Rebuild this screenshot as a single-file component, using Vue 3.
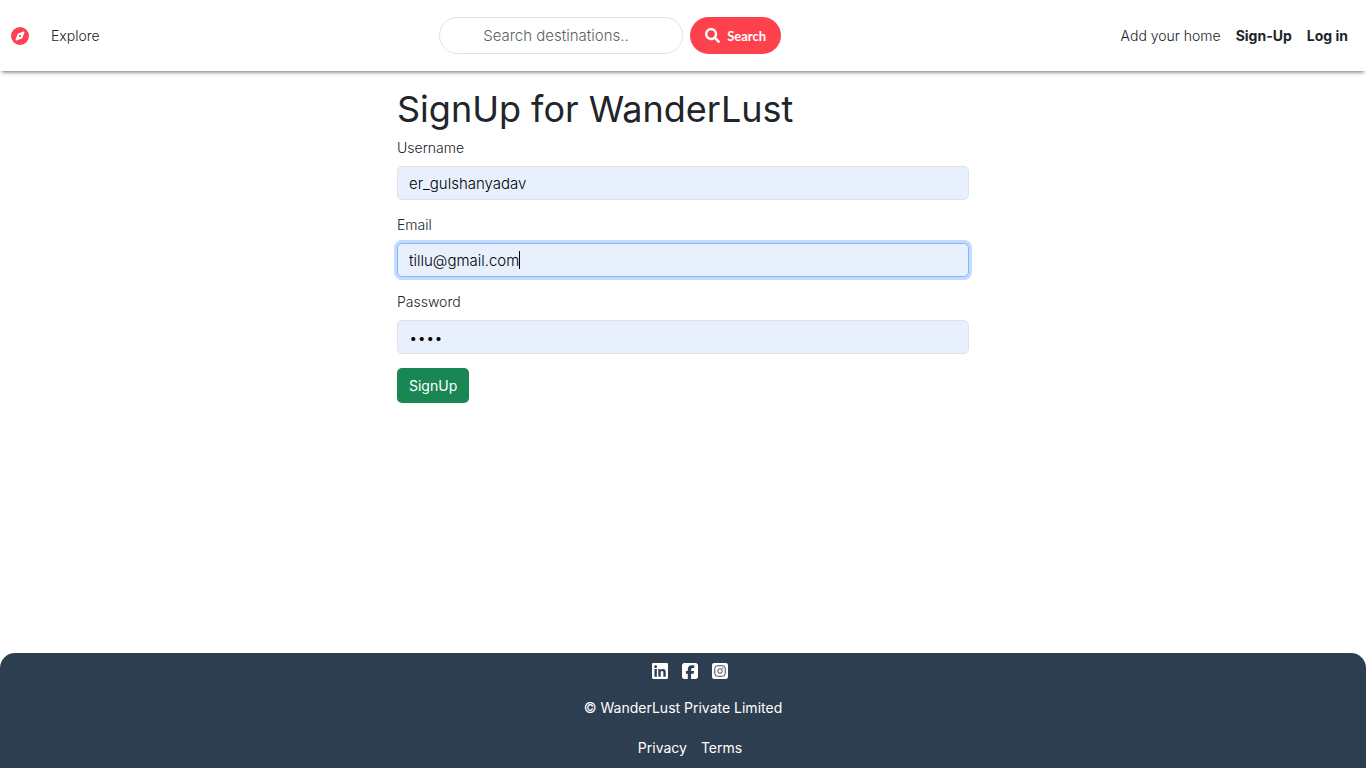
<script setup>
import { onMounted, ref } from 'vue'

const search = ref('')
const username = ref('er_gulshanyadav')
const email = ref('tillu@gmail.com')
const password = ref('1234')
const emailInput = ref(null)

onMounted(() => {
  const el = emailInput.value
  el.focus()
  el.setSelectionRange(email.value.length, email.value.length)
})
</script>

<template>
  <div class="page">
    <nav class="navbar">
      <div class="group left">
        <a href="#" class="brand" aria-label="WanderLust home">
          <svg viewBox="0 0 512 512" width="18" height="18" fill="currentColor" aria-hidden="true">
            <path d="M256 512A256 256 0 1 0 256 0a256 256 0 1 0 0 512zm50.7-186.9L162.4 380.6c-19.4 7.5-38.5-11.6-31-31l55.5-144.3c3.3-8.5 9.9-15.1 18.4-18.4l144.3-55.5c19.4-7.5 38.5 11.6 31 31L325.1 306.7c-3.2 8.5-9.9 15.1-18.4 18.4zM288 256a32 32 0 1 0 -64 0 32 32 0 1 0 64 0z" />
          </svg>
        </a>
        <a href="#" class="link">Explore</a>
      </div>

      <form class="search" role="search" @submit.prevent>
        <input v-model="search" class="search-input" type="search" placeholder="Search destinations.." aria-label="Search destinations" />
        <button class="search-btn" type="submit">
          <svg viewBox="0 0 512 512" width="15" height="15" fill="currentColor" aria-hidden="true">
            <path d="M505 442.7L405.3 343c-4.5-4.5-10.6-7-17-7H372c27.6-35.3 44-79.7 44-128C416 93.1 322.9 0 208 0S0 93.1 0 208s93.1 208 208 208c48.3 0 92.7-16.4 128-44v16.3c0 6.4 2.5 12.5 7 17l99.7 99.7c9.4 9.4 24.6 9.4 33.9 0l28.3-28.3c9.4-9.4 9.4-24.6.1-34zM208 336c-70.7 0-128-57.2-128-128 0-70.7 57.2-128 128-128 70.7 0 128 57.2 128 128 0 70.7-57.2 128-128 128z" />
          </svg>
          <span>Search</span>
        </button>
      </form>

      <div class="group right">
        <a href="#" class="link">Add your home</a>
        <a href="#" class="link strong">Sign-Up</a>
        <a href="#" class="link strong">Log in</a>
      </div>
    </nav>

    <main class="content">
      <h1>SignUp for WanderLust</h1>
      <form @submit.prevent>
        <div class="field">
          <label for="username">Username</label>
          <input id="username" v-model="username" type="text" spellcheck="false" />
        </div>
        <div class="field">
          <label for="email">Email</label>
          <div class="caret-box">
            <input id="email" ref="emailInput" v-model="email" type="text" inputmode="email" spellcheck="false" />
            <div class="caret-layer" aria-hidden="true">
              <span class="measure">{{ email }}</span>
              <span class="caret"></span>
            </div>
          </div>
        </div>
        <div class="field">
          <label for="password">Password</label>
          <input id="password" v-model="password" type="password" />
        </div>
        <button class="submit" type="submit">SignUp</button>
      </form>
    </main>

    <footer class="footer">
      <div class="socials">
        <a href="#" aria-label="LinkedIn">
          <svg viewBox="0 32 448 448" width="16" height="16" fill="currentColor" aria-hidden="true">
            <path d="M416 32H31.9C14.3 32 0 46.5 0 64.3v383.4C0 465.5 14.3 480 31.9 480H416c17.6 0 32-14.5 32-32.3V64.3c0-17.8-14.4-32.3-32-32.3zM135.4 416H69V202.2h66.5V416zm-33.2-243c-21.3 0-38.5-17.3-38.5-38.5S80.9 96 102.2 96c21.2 0 38.5 17.3 38.5 38.5 0 21.3-17.2 38.5-38.5 38.5zm282.1 243h-66.4V312c0-24.8-.5-56.7-34.5-56.7-34.6 0-39.9 27-39.9 54.9V416h-66.4V202.2h63.7v29.2h.9c8.9-16.8 30.6-34.5 62.9-34.5 67.2 0 79.7 44.3 79.7 101.9V416z" />
          </svg>
        </a>
        <a href="#" aria-label="Facebook">
          <svg viewBox="0 32 448 448" width="16" height="16" fill="currentColor" aria-hidden="true">
            <path d="M64 32C28.7 32 0 60.7 0 96V416c0 35.3 28.7 64 64 64h98.2V334.2H109.4V256h52.8V222.3c0-87.1 39.4-127.5 125-127.5c16.2 0 44.2 3.2 55.7 6.4V172c-6-.6-16.5-1-29.6-1c-42 0-58.2 15.9-58.2 57.2V256h83.6l-14.4 78.2H255V480H384c35.3 0 64-28.7 64-64V96c0-35.3-28.7-64-64-64H64z" />
          </svg>
        </a>
        <a href="#" aria-label="Instagram">
          <svg viewBox="0 0 448 448" width="16" height="16" aria-hidden="true">
            <rect width="448" height="448" rx="64" fill="currentColor" />
            <g fill="none" stroke="#2d3e50" stroke-width="26">
              <rect x="77" y="77" width="294" height="294" rx="76" />
              <circle cx="224" cy="224" r="63" />
            </g>
            <circle cx="303" cy="145" r="18" fill="#2d3e50" />
          </svg>
        </a>
      </div>
      <div>© WanderLust Private Limited</div>
      <div class="legal">
        <a href="#">Privacy</a>
        <a href="#">Terms</a>
      </div>
    </footer>
  </div>
</template>

<style>
body {
  margin: 0;
  background: #fff;
}
</style>

<style scoped>
.page {
  box-sizing: border-box;
  display: flex;
  flex-direction: column;
  min-height: 100vh;
  color: #212529;
  font-family: Inter, "Liberation Sans", sans-serif;
  font-size: 14px;
  font-weight: 300;
  line-height: 22px;
}

input,
button {
  box-sizing: border-box;
  font: inherit;
}

a {
  color: inherit;
  text-decoration: none;
}

svg {
  display: block;
}

.navbar {
  display: flex;
  align-items: center;
  justify-content: space-between;
  box-sizing: border-box;
  min-height: 71px;
  padding: 0 18px 0 11px;
  background: #fff;
  box-shadow: 0 3px 4px -2px #2c3e50c0;
}

.group {
  display: flex;
  align-items: center;
}

.left {
  gap: 22px;
}

.right {
  gap: 15px;
}

.brand {
  color: #fe424d;
}

.strong {
  font-weight: 700;
}

.search {
  display: flex;
  gap: 7px;
}

.search-input {
  width: 244px;
  height: 37px;
  padding: 0 12px 0 43px;
  border: 1px solid #dee2e6;
  border-radius: 22px;
  background: #fff;
  color: #212529;
  font-size: 15px;
  outline: none;
  appearance: none;
}

.search-input::placeholder {
  color: #595f65;
  opacity: 1;
}

.search-btn {
  display: flex;
  align-items: center;
  gap: 7px;
  height: 37px;
  padding: 0 15px;
  border: 0;
  border-radius: 22px;
  background: #fe424d;
  color: #fff;
  font-family: Lato, "Liberation Sans", sans-serif;
  font-size: 13px;
  font-weight: 700;
}

.content {
  flex: 1;
  box-sizing: border-box;
  width: 100%;
  max-width: 572px;
  margin: 0 auto;
  padding-top: 16px;
}

h1 {
  margin: 0 0 6px;
  font-size: 36px;
  font-weight: 400;
  line-height: 44px;
}

.field {
  display: flex;
  flex-direction: column;
  gap: 7px;
  margin-bottom: 14px;
}

.field label {
  align-self: flex-start;
}

.field input {
  display: block;
  width: 100%;
  height: 34px;
  padding: 0 11px;
  border: 1px solid #dee2e6;
  border-radius: 5px;
  background: #e8f0fe;
  color: #000;
  font-size: 15px;
  outline: none;
}

.field input:focus {
  border-color: #86b7fe;
  box-shadow: 0 0 0 3px #c2dbfe;
}

.caret-box {
  position: relative;
}

.caret-box input {
  caret-color: transparent;
}

.caret-layer {
  position: absolute;
  inset: 0;
  display: none;
  align-items: center;
  padding: 0 12px;
  overflow: hidden;
  font-size: 15px;
  pointer-events: none;
}

.caret-box input:focus + .caret-layer {
  display: flex;
}

.measure {
  visibility: hidden;
  white-space: pre;
}

.caret {
  width: 1px;
  height: 18px;
  background: #000;
}

.submit {
  height: 35px;
  padding: 0 12px;
  border: 0;
  border-radius: 5px;
  background: #198754;
  color: #fff;
  font-weight: 400;
}

.footer {
  display: flex;
  flex-direction: column;
  align-items: center;
  gap: 18px;
  box-sizing: border-box;
  min-height: 115px;
  padding: 10px 0 9px;
  border-radius: 15px 15px 0 0;
  background: #2d3e50;
  color: #fff;
  font-weight: 400;
}

.socials,
.legal {
  display: flex;
  gap: 14px;
  padding-left: 14px;
}
</style>
